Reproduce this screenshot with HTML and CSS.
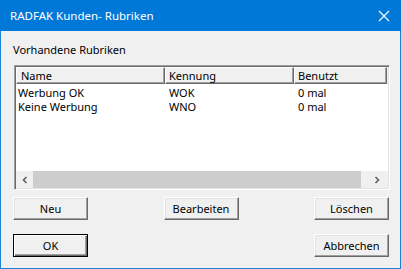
FILE: index.html
```html
<!DOCTYPE html>
<html>
<head>
  <meta charset="utf-8">
  <title>RADFAK Kunden- Rubriken</title>
  <link rel="stylesheet" href="styles.css">
</head>
<body>
  <div class="window">
    <div class="titlebar">
      <span class="title">RADFAK Kunden- Rubriken</span>
      <svg class="close" width="12" height="12" viewBox="0 0 12 12">
        <path d="M1 1 L11 11 M11 1 L1 11" stroke="#fff" stroke-width="1.1" fill="none"/>
      </svg>
    </div>

    <div class="content">
      <div class="caption">Vorhandene Rubriken</div>

      <div class="listbox">
        <div class="list-header">
          <div class="col col-name">Name</div>
          <div class="col col-code">Kennung</div>
          <div class="col col-used">Benutzt</div>
        </div>
        <div class="list-body">
          <div class="row">
            <div class="cell col-name">Werbung OK</div>
            <div class="cell col-code">WOK</div>
            <div class="cell col-used">0 mal</div>
          </div>
          <div class="row">
            <div class="cell col-name">Keine Werbung</div>
            <div class="cell col-code">WNO</div>
            <div class="cell col-used">0 mal</div>
          </div>
        </div>
        <div class="hscroll">
          <div class="arrow">
            <svg width="8" height="8" viewBox="0 0 8 8"><path d="M5.5 1 L2.5 4 L5.5 7" stroke="#606060" stroke-width="1.6" fill="none"/></svg>
          </div>
          <div class="thumb"></div>
          <div class="arrow">
            <svg width="8" height="8" viewBox="0 0 8 8"><path d="M2.5 1 L5.5 4 L2.5 7" stroke="#606060" stroke-width="1.6" fill="none"/></svg>
          </div>
        </div>
      </div>

      <div class="button-row">
        <button>Neu</button>
        <button>Bearbeiten</button>
        <button>Löschen</button>
      </div>

      <div class="button-row bottom">
        <button class="default">OK</button>
        <button>Abbrechen</button>
      </div>
    </div>
  </div>
</body>
</html>
```

FILE: styles.css
```css
body {
  margin: 0;
  padding: 0;
  font-family: "Noto Sans", Arial, sans-serif;
  font-size: 11px;
  color: #000;
}

.window {
  width: 401px;
  height: 269px;
  box-sizing: border-box;
  border: 1px solid #1883d7;
  border-top: none;
  background-color: #f0f0f0;
  display: flex;
  flex-direction: column;
}

.titlebar {
  height: 31px;
  margin: 0 -1px;
  background-color: #0078d7;
  display: flex;
  align-items: center;
  justify-content: space-between;
  padding: 0 11px 0 10px;
  color: #fff;
}

.title {
  font-size: 11.5px;
  line-height: 14px;
}

.close {
  display: block;
}

.content {
  flex: 1;
  padding: 10px 11px 0 12px;
}

.caption {
  height: 13px;
  line-height: 13px;
  padding-top: 2px;
  margin-bottom: 9px;
}

.listbox {
  width: 376px;
  height: 125px;
  box-sizing: border-box;
  margin-left: 1px;
  border-top: 1px solid #a0a0a0;
  border-left: 1px solid #a0a0a0;
  border-right: 1px solid #ffffff;
  border-bottom: 1px solid #ffffff;
  box-shadow: inset 1px 1px 0 #696969, inset -1px -1px 0 #e3e3e3;
  background-color: #fff;
  display: flex;
  flex-direction: column;
  padding: 1px;
}

.list-header {
  display: flex;
  height: 17px;
  background-color: #f0f0f0;
}

.col {
  box-sizing: border-box;
  height: 17px;
  line-height: 15px;
  padding-left: 4px;
  border-top: 1px solid #fff;
  border-left: 1px solid #fff;
  border-right: 1px solid #696969;
  border-bottom: 1px solid #696969;
  box-shadow: inset -1px -1px 0 #a0a0a0;
}

.col.col-code,
.col.col-used {
  padding-left: 3px;
}

.col-name {
  width: 149px;
}

.col-code {
  width: 129px;
}

.col-used {
  width: 93px;
}

.list-body {
  flex: 1;
  padding-top: 2px;
}

.row {
  display: flex;
  height: 14px;
  line-height: 14px;
}

.cell {
  box-sizing: border-box;
  padding-left: 2px;
}

.cell.col-code,
.cell.col-used {
  padding-left: 4px;
}

.hscroll {
  display: flex;
  height: 17px;
  background-color: #f0f0f0;
}

.arrow {
  width: 17px;
  display: flex;
  align-items: center;
  justify-content: center;
}

.thumb {
  flex: 1;
  background-color: #cdcdcd;
  margin-right: 5px;
}

.hscroll .arrow:last-child {
  width: 22px;
}

.button-row {
  display: flex;
  justify-content: space-between;
  margin-top: 7px;
}

.button-row.bottom {
  margin-top: 14px;
}

button {
  width: 75px;
  height: 23px;
  box-sizing: border-box;
  font-family: "Noto Sans", Arial, sans-serif;
  font-size: 11px;
  color: #000;
  background-color: #f0f0f0;
  border-top: 1px solid #fff;
  border-left: 1px solid #fff;
  border-right: 1px solid #696969;
  border-bottom: 1px solid #696969;
  box-shadow: inset -1px -1px 0 #a0a0a0, inset 1px 1px 0 #e3e3e3;
  padding: 0;
}

button.default {
  border: 1px solid #000;
  box-shadow: inset 1px 1px 0 #fff, inset -1px -1px 0 #696969, inset -2px -2px 0 #a0a0a0;
}
```
